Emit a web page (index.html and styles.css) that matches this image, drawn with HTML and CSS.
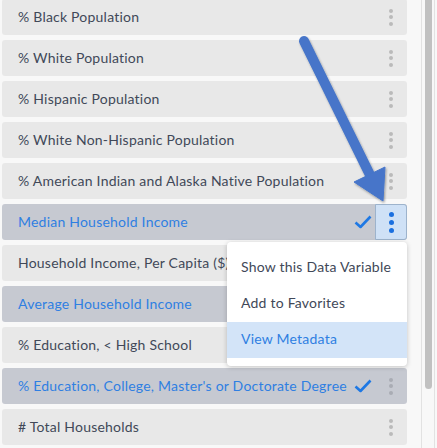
FILE: index.html
```html
<!DOCTYPE html>
<html lang="en">
<head>
  <meta charset="UTF-8" />
  <title>Data Variables</title>
  <meta name="viewport" content="width=device-width, initial-scale=1" />
  <link rel="stylesheet" href="styles.css">
</head>
<body>

  <div class="panel">

    <!-- Variable list -->
    <ul class="var-list">
      <li class="var-row"><span class="var-name">% Black Population</span><span class="kebab"><i></i><i></i><i></i></span></li>
      <li class="var-row"><span class="var-name">% White Population</span><span class="kebab"><i></i><i></i><i></i></span></li>
      <li class="var-row"><span class="var-name">% Hispanic Population</span><span class="kebab"><i></i><i></i><i></i></span></li>
      <li class="var-row"><span class="var-name">% White Non-Hispanic Population</span><span class="kebab"><i></i><i></i><i></i></span></li>
      <li class="var-row"><span class="var-name">% American Indian and Alaska Native Population</span><span class="kebab"><i></i><i></i><i></i></span></li>
      <li class="var-row selected">
        <span class="var-name">Median Household Income</span>
        <svg class="check" viewBox="0 0 18 14"><path d="M1.5 7.5 L6.5 12 L16.5 1.5" /></svg>
        <span class="kebab open"><i></i><i></i><i></i></span>
      </li>
      <li class="var-row"><span class="var-name">Household Income, Per Capita ($)</span><span class="kebab"><i></i><i></i><i></i></span></li>
      <li class="var-row selected"><span class="var-name">Average Household Income</span><span class="kebab"><i></i><i></i><i></i></span></li>
      <li class="var-row"><span class="var-name">% Education, &lt; High School</span><span class="kebab"><i></i><i></i><i></i></span></li>
      <li class="var-row selected">
        <span class="var-name">% Education, College, Master's or Doctorate Degree</span>
        <svg class="check" viewBox="0 0 18 14"><path d="M1.5 7.5 L6.5 12 L16.5 1.5" /></svg>
        <span class="kebab"><i></i><i></i><i></i></span>
      </li>
      <li class="var-row"><span class="var-name"># Total Households</span><span class="kebab"><i></i><i></i><i></i></span></li>
    </ul>

    <div class="scroll-track">
      <div class="scroll-thumb"></div>
    </div>

    <!-- Context menu for the open row -->
    <div class="menu">
      <div class="menu-item">Show this Data Variable</div>
      <div class="menu-item">Add to Favorites</div>
      <div class="menu-item active">View Metadata</div>
    </div>

    <!-- Callout arrow -->
    <svg class="arrow" width="437" height="448" viewBox="0 0 437 448">
      <defs>
        <filter id="shadow" x="-20%" y="-20%" width="140%" height="140%">
          <feDropShadow dx="1" dy="1.5" stdDeviation="1.2" flood-color="#000" flood-opacity="0.35" />
        </filter>
      </defs>
      <g filter="url(#shadow)" fill="#4675c9" stroke="#4675c9">
        <line x1="304" y1="41" x2="371" y2="177" stroke-width="10" stroke-linecap="round" />
        <polygon points="354,182 385,167 383,201" stroke-width="1" stroke-linejoin="round" />
      </g>
    </svg>

  </div>

</body>
</html>
```

FILE: styles.css
```css
* { box-sizing: border-box; }
html, body { height: 100%; margin: 0; overflow: hidden; }
body {
  background: #f8f8f8;
  font-family: Lato, "Open Sans", sans-serif;
  font-size: 14px;
  letter-spacing: 0.22px;
  color: #414858;
}

.panel {
  position: relative;
  display: flex;
  height: 448px;
}

.var-list {
  list-style: none;
  margin: -1px 14px 0 2px;
  padding: 0;
  width: 405px;
  display: flex;
  flex-direction: column;
  gap: 5px;
}

.var-row {
  display: flex;
  align-items: center;
  height: 36px;
  padding-left: 16px;
  background: #e8e8e8;
  border-radius: 3px;
}

.var-row.selected {
  background: #c6c9d1;
  color: #2f7fe2;
}

.var-name {
  flex: 1;
  white-space: nowrap;
  overflow: hidden;
  padding-bottom: 2px;
}

.check {
  width: 18px;
  height: 14px;
  margin-right: 3px;
  flex: none;
}
.check path {
  fill: none;
  stroke: #1e78e4;
  stroke-width: 2.6;
  stroke-linejoin: round;
}

.kebab {
  width: 32px;
  height: 100%;
  flex: none;
  display: flex;
  flex-direction: column;
  align-items: center;
  justify-content: center;
  gap: 2.5px;
}
.kebab i {
  display: block;
  width: 4px;
  height: 4px;
  border-radius: 50%;
  background: #bababa;
}
.selected .kebab i { background: #a9acb4; }

.kebab.open {
  background: #cfe1f6;
  border: 1px solid #9db3cc;
  border-radius: 0 3px 3px 0;
  gap: 3px;
}
.kebab.open i {
  width: 5px;
  height: 5px;
  background: #1a6fdf;
}

.scroll-track {
  width: 14px;
  height: 100%;
  border-left: 1px solid #e2e2e2;
  border-right: 1px solid #e2e2e2;
  padding-left: 3px;
}
.scroll-thumb {
  width: 7px;
  height: 389px;
  background: #c1c1c1;
  border-radius: 0 0 4px 4px;
}

.menu {
  position: absolute;
  left: 227px;
  top: 242px;
  width: 180px;
  padding: 8px 0;
  background: #fff;
  border-radius: 4px;
  box-shadow: 0 1px 5px rgba(0, 0, 0, 0.22);
}
.menu-item {
  height: 36px;
  line-height: 34px;
  padding-left: 14px;
  color: #414858;
}
.menu-item.active {
  background: #d3e4f8;
  color: #2f7fe2;
}

.arrow {
  position: absolute;
  left: 0;
  top: 0;
  pointer-events: none;
}
```
